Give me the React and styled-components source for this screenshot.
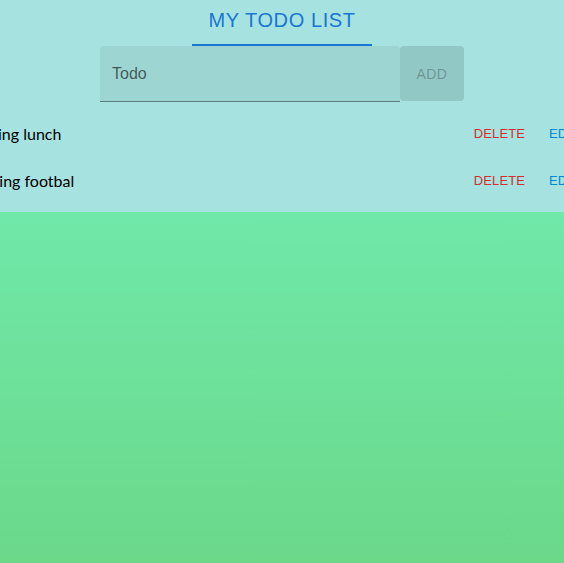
import React from 'react';
import styled, { createGlobalStyle } from 'styled-components';

const GlobalStyle = createGlobalStyle`
  html,
  body {
    margin: 0;
    padding: 0;
    overflow-x: hidden;
  }

  body {
    font-family: "Liberation Sans", Arial, sans-serif;
  }
`;

const Page = styled.div`
  display: flex;
  flex-direction: column;
  min-height: 100vh;
`;

const Header = styled.header`
  display: flex;
  flex-direction: column;
  align-items: center;
  background: #a6e3e0;
  overflow: hidden;
`;

const Title = styled.h1`
  margin: 0;
  padding: 8px 16px 12px;
  border-bottom: 2px solid #1976d2;
  color: #1976d2;
  font-size: 20px;
  font-weight: 400;
  line-height: 24px;
  letter-spacing: 0.6px;
  text-transform: uppercase;
`;

const Form = styled.form`
  display: flex;
`;

const Field = styled.label`
  display: flex;
  align-items: center;
  box-sizing: border-box;
  width: 300px;
  height: 56px;
  padding: 0 12px;
  border-radius: 4px 4px 0 0;
  border-bottom: 1px solid rgba(0, 0, 0, 0.42);
  background: rgba(0, 0, 0, 0.06);
  color: rgba(0, 0, 0, 0.6);
  font-size: 16px;
  line-height: 23px;
`;

const AddButton = styled.button`
  min-width: 64px;
  height: 55px;
  padding: 6px 16px;
  border: none;
  border-radius: 4px;
  background: rgba(0, 0, 0, 0.12);
  color: rgba(0, 0, 0, 0.26);
  font-family: inherit;
  font-size: 14px;
  font-weight: 500;
  letter-spacing: 0.4px;
  text-transform: uppercase;
`;

const List = styled.ul`
  flex-shrink: 0;
  width: 624px;
  margin: 0;
  padding: 8px 0;
  list-style: none;
`;

const Row = styled.li`
  display: flex;
  align-items: center;
  height: 47px;
  padding: 0 7px 0 0;
`;

const ItemText = styled.span`
  flex: 1;
  color: #000;
  font-family: Lato, "Open Sans", sans-serif;
  font-size: 16px;
`;

const ActionButton = styled.button`
  margin-left: 8px;
  padding: 6px 8px;
  border: none;
  background: transparent;
  color: ${(p) => p.$tone};
  font-family: "Liberation Sans", Arial, sans-serif;
  font-size: 13px;
  font-weight: 500;
  line-height: 24px;
  letter-spacing: 0.1px;
  text-transform: uppercase;
`;

const Main = styled.main`
  flex: 1;
  background: linear-gradient(to bottom, #70e8a9, #6bd88a);
`;

const todos = ['Having lunch', 'Playing footbal'];

export default function App() {
  return (
    <Page>
      <GlobalStyle />
      <Header>
        <Title>My Todo List</Title>
        <Form onSubmit={(e) => e.preventDefault()}>
          <Field>Todo</Field>
          <AddButton type="submit" disabled>
            Add
          </AddButton>
        </Form>
        <List>
          {todos.map((todo) => (
            <Row key={todo}>
              <ItemText>{todo}</ItemText>
              <ActionButton $tone="#d32f2f">Delete</ActionButton>
              <ActionButton $tone="#0288d1">Edit</ActionButton>
            </Row>
          ))}
        </List>
      </Header>
      <Main />
    </Page>
  );
}
